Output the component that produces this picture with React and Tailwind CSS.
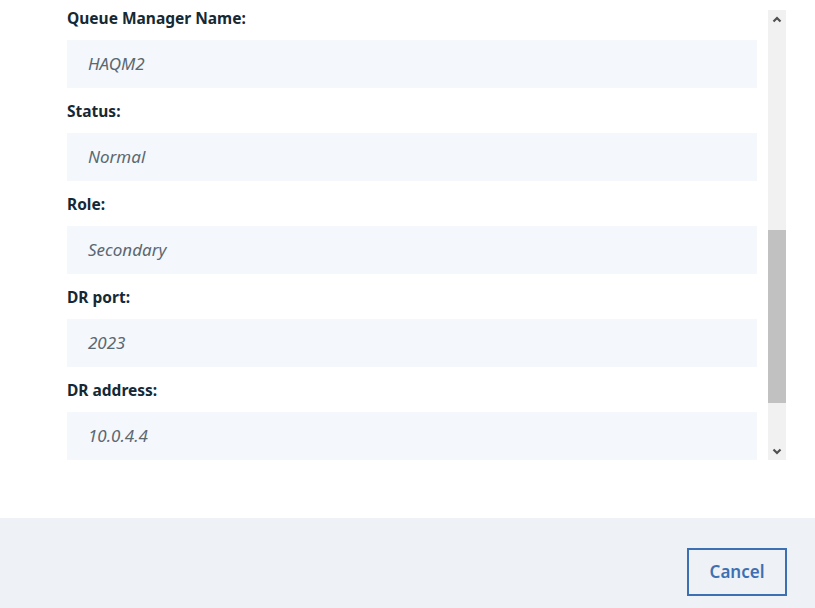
import React from 'react';

const fields = [
  { label: 'Queue Manager Name:', value: 'HAQM2' },
  { label: 'Status:', value: 'Normal' },
  { label: 'Role:', value: 'Secondary' },
  { label: 'DR port:', value: '2023' },
  { label: 'DR address:', value: '10.0.4.4' },
];

const Chevron = ({ up }) => (
  <svg width="10" height="7" viewBox="0 0 10 7" className="block">
    <path
      d={up ? 'M1.5 5.5 L5 2 L8.5 5.5' : 'M1.5 1.5 L5 5 L8.5 1.5'}
      fill="none"
      stroke="#505050"
      strokeWidth="2.2"
    />
  </svg>
);

export default function App() {
  return (
    <div
      className="w-[815px] h-[608px] bg-white flex flex-col overflow-hidden"
      style={{ fontFamily: '"Noto Sans", "Open Sans", sans-serif' }}
    >
      {/* Scroll area */}
      <div className="h-[518px] flex pl-[67px]">
        <div className="w-[690px] flex flex-col gap-[13px] pt-[8px]">
          {fields.map((f) => (
            <div key={f.label} className="flex flex-col">
              <div className="text-[15.5px] leading-[20px] font-bold text-[#152935] mb-[12px]">
                {f.label}
              </div>
              <div className="h-[48px] bg-[#f4f7fb] flex items-center pl-[21px] text-[17px] italic text-[#5a6872]">
                {f.value}
              </div>
            </div>
          ))}
        </div>

        {/* Scrollbar */}
        <div className="ml-[11px] mt-[10px] w-[18px] h-[450px] bg-[#f1f1f1] flex flex-col">
          <div className="h-[18px] flex items-center justify-center">
            <Chevron up />
          </div>
          <div className="h-[202px]" />
          <div className="h-[173px] bg-[#c1c1c1]" />
          <div className="flex-1" />
          <div className="h-[18px] flex items-center justify-center">
            <Chevron />
          </div>
        </div>
      </div>

      {/* Footer */}
      <div className="flex-1 bg-[#eef1f5] flex justify-end items-start pt-[30px] pr-[28px]">
        <button className="w-[100px] h-[48px] border-2 border-[#3d70b2] text-[#3d70b2] text-[17px] font-semibold flex items-center justify-center">
          Cancel
        </button>
      </div>
    </div>
  );
}
